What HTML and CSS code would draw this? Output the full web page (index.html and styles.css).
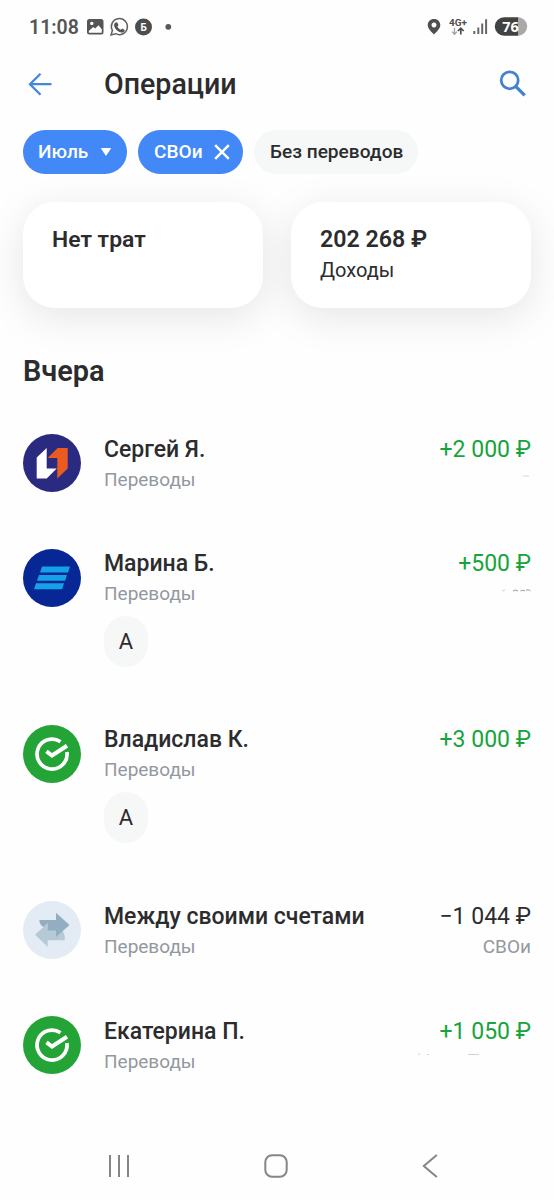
FILE: index.html
```html
<!DOCTYPE html>
<html lang="ru">
<head>
<meta charset="utf-8">
<title>Операции</title>
<link rel="stylesheet" href="styles.css">
</head>
<body>
<div class="screen">
  <div class="status">
    <span class="clock">11:08</span>
    <svg class="st-left" width="100" height="20" viewBox="85 17 100 20">
      <path fill="#555" fill-rule="evenodd" d="M89.500 19h11.500a2.500 2.500 0 0 1 2.500 2.500v10.500a2.500 2.500 0 0 1-2.500 2.500H89.500a2.500 2.500 0 0 1-2.500-2.500V21.500a2.500 2.500 0 0 1 2.500-2.500zM88.800 32.700h13v-3.500l-3.300-4-3.400 3.400-1.800-1.500-4.500 3.800zM91.800 21.700a1.700 1.700 0 1 0 .01 0z"/>
      <path fill="none" stroke="#606060" stroke-width="1.500" d="M111 35l1.400-4.500a8 8 0 1 1 3.300 3.200z"/>
      <path fill="#555" d="M115.600 22.400l1.500-.2 1.400 2.900-1.100 1.400c.8 1.600 1.800 2.600 3.300 3.300l1.400-1.400 2.700 1.500c-.2 2-1.600 2.800-3.200 2.600-3.600-.5-7.200-4-7.500-7.300-.1-1.200.5-2.200 1.500-2.800z"/>
      <circle cx="143.500" cy="27" r="8.500" fill="#4d4d4d"/>
      <text class="badge-letter" x="143.600" y="30.700" text-anchor="middle">Б</text>
      <circle cx="168.300" cy="26.800" r="2.900" fill="#595959"/>
    </svg>
    <svg class="st-right" width="102" height="22" viewBox="426 16 102 22">
      <path fill="#4f4f4f" fill-rule="evenodd" d="M434 19c3.700 0 6.300 2.700 6.300 6 0 4-4 7-6.300 9.500-2.300-2.500-6.300-5.500-6.300-9.500 0-3.300 2.600-6 6.300-6zm0 3.600a2.500 2.500 0 1 0 .01 0z"/>
      <text class="net" x="449" y="25.800" textLength="18" lengthAdjust="spacingAndGlyphs">4G+</text>
      <path fill="none" stroke="#a2a2a2" stroke-width="1.300" d="M454.500 28v6.300M452 31.600l2.500 2.600 2.500-2.600"/>
      <path fill="none" stroke="#4d4d4d" stroke-width="1.700" d="M460.800 34.500v-6M457.900 31l2.900-2.900 2.900 2.900"/>
      <path fill="none" stroke="#666" stroke-width="2" d="M474.300 31v3M478.300 27.500V34M482.200 23.500V34M486.100 19.300V34"/>
      <path fill="#424242" d="M518.500 17.300H504a9.200 9.200 0 0 0 0 18.400h14.500z"/>
      <path fill="#a9a9a9" d="M518 17.300a9.200 9.200 0 0 1 0 18.400z"/>
      <text class="pct" x="510.500" y="31.900" text-anchor="middle">76</text>
    </svg>
  </div>

  <div class="header">
    <svg class="back" width="24" height="24" viewBox="0 0 24 24"><path fill="none" stroke="#4386df" stroke-width="2.300" d="M23.500 12.200H2M12.500 1.700L2 12.200 12.500 22.700"/></svg>
    <h1 class="title">Операции</h1>
    <svg class="search" width="28" height="28" viewBox="0 0 28 28"><circle cx="10.700" cy="10.300" r="8.500" fill="none" stroke="#4681cb" stroke-width="2.800"/><path stroke="#4681cb" stroke-width="3.300" d="M16.700 16.300l9 9"/></svg>
  </div>

  <div class="chips">
    <div class="chip chip-month">Июль<svg width="12" height="9" viewBox="0 0 12 9"><path fill="#fff" stroke="#fff" stroke-linejoin="round" d="M1.500 1.500h9L6 8.300z"/></svg></div>
    <div class="chip chip-account">СВОи<svg width="16" height="16" viewBox="0 0 16 16"><path stroke="#fff" stroke-width="2.500" d="M1.200 1.200l13.600 13.600M14.800 1.200L1.200 14.800"/></svg></div>
    <div class="chip chip-light">Без переводов</div>
  </div>

  <div class="cards">
    <div class="card"><div class="card-title">Нет трат</div></div>
    <div class="card"><div class="card-title card-sum">202 268 ₽</div><div class="card-sub">Доходы</div></div>
  </div>

  <h2 class="day">Вчера</h2>

  <div class="list">
    <div class="row">
      <svg class="avatar" viewBox="0 0 58 58"><circle cx="29" cy="29" r="29" fill="#2a2a80"/><path fill="#fff" d="M13.700 23.500L23.700 14v20.500h10L23.700 44.500h-10z"/><path fill="#eb5b20" d="M34.700 14h10v20.500L34.300 44.500V24h-9.600z"/></svg>
      <div class="info"><div class="name">Сергей Я.</div><div class="kind">Переводы</div></div>
      <div class="side"><div class="sum plus">+2 000 ₽</div>
        <svg class="trace" width="120" height="4" viewBox="0 0 120 4"><path stroke="#d8d8d8" d="M112 2.500q3-1.500 6 0" fill="none"/></svg></div>
    </div>
    <div class="row row-tagged">
      <svg class="avatar" viewBox="0 0 58 58"><circle cx="29" cy="29" r="29" fill="#072795"/><path fill="#16a0e8" d="M19 17.500h28l-1.900 6H17zM16 26h28l-1.900 5.700H14zM13 34.200h28l-1.900 6H11z"/></svg>
      <div class="info"><div class="name">Марина Б.</div><div class="kind">Переводы</div><div class="tag">А</div></div>
      <div class="side"><div class="sum plus">+500 ₽</div>
        <svg class="trace" width="120" height="4" viewBox="0 0 120 4"><path stroke="#9b9b9b" d="M102 3q2.500-2 5 0M109.500 3q2.500-1.500 4.500 0M115 2h2q2 0 2.500 1" fill="none"/><path stroke="#d0d0d0" d="M91 3l3-1"/></svg></div>
    </div>
    <div class="row row-tagged">
      <svg class="avatar" viewBox="0 0 58 58"><g id="check"><circle cx="29" cy="29" r="29" fill="#24a336"/><path fill="none" stroke="#fff" stroke-width="3.700" d="M37.500 16.700A15 15 0 1 0 43.900 27"/><path fill="none" stroke="#fff" stroke-width="4" d="M23.500 26.300l5.500 4.200 15-9.700"/></g></svg>
      <div class="info"><div class="name">Владислав К.</div><div class="kind">Переводы</div><div class="tag">А</div></div>
      <div class="side"><div class="sum plus">+3 000 ₽</div></div>
    </div>
    <div class="row">
      <svg class="avatar" viewBox="0 0 58 58"><circle cx="29" cy="29" r="29" fill="#e3ebf4"/><path fill="#b5c9d7" d="M12 33.800L24.700 22.200v5.300H39l2.700 7.500v4.300h-17v6.500z"/><path fill="#93aec1" d="M16.300 19h16.700v-7.300L46.500 23.900 33 36v-6.500h-8.300v-7.300L20.500 26q-4-2-4.200-7z"/></svg>
      <div class="info"><div class="name">Между своими счетами</div><div class="kind">Переводы</div></div>
      <div class="side"><div class="sum">−1 044 ₽</div><div class="kind">СВОи</div></div>
    </div>
    <div class="row">
      <svg class="avatar" viewBox="0 0 58 58"><use href="#check"/></svg>
      <div class="info"><div class="name">Екатерина П.</div><div class="kind">Переводы</div></div>
      <div class="side"><div class="sum plus">+1 050 ₽</div>
        <svg class="trace trace-near" width="120" height="4" viewBox="0 0 120 4"><path stroke="#d2d2d2" d="M7 3l2-1.500M16 2.500h2M57 2.500h11"/></svg></div>
    </div>
  </div>

  <div class="nav">
    <svg width="22" height="24" viewBox="0 0 22 24"><path stroke="#858585" stroke-width="2" d="M2 1v22M11 1v22M20 1v22"/></svg>
    <svg width="24" height="24" viewBox="0 0 24 24"><rect x="1.300" y="1.300" width="21.400" height="21.400" rx="6.800" fill="none" stroke="#858585" stroke-width="2"/></svg>
    <svg width="22" height="24" viewBox="0 0 22 24"><path fill="none" stroke="#858585" stroke-width="2" d="M14.800 1L1.800 12l13 11"/></svg>
  </div>
</div>
</body>
</html>
```

FILE: styles.css
```css
* { box-sizing: border-box; }
body { margin: 0; background: #fefefe; color: #2c2c2e; font-family: Roboto, "Noto Sans", sans-serif; }
svg { display: block; flex: none; }
.screen { width: 554px; height: 1200px; overflow: hidden; display: flex; flex-direction: column; }

.status { height: 54px; flex: none; display: flex; align-items: center; padding: 0 26px 0 29px; }
.clock { width: 56px; font-size: 19.500px; font-weight: 600; color: #555; white-space: nowrap; }
.st-right { margin-left: auto; }
.badge-letter { font: bold 10px Roboto, sans-serif; fill: #fff; }
.net { font: bold 9.500px Roboto, sans-serif; fill: #4d4d4d; }
.pct { font: bold 14.500px "Open Sans", sans-serif; fill: #fff; }

.header { height: 60px; flex: none; display: flex; align-items: center; padding: 0 27px 0 28px; }
.title { margin: 0 0 1px 52px; font-size: 28.600px; line-height: 36px; font-weight: 500; }
.search { margin-left: auto; }

.chips { height: 44px; flex: none; margin: 16px 23px 0; display: flex; gap: 11px; }
.chip { display: flex; align-items: center; border-radius: 22px; padding: 0 15px; height: 43.500px; font-size: 19.100px; font-weight: 500; color: #fff; background: #4288f7; white-space: nowrap; }
.chip-month { width: 104px; justify-content: space-between; }
.chip-account { width: 105px; justify-content: space-between; padding: 0 13px 0 16px; }
.chip-light { width: 164px; padding-left: 16px; background: #f6f8f8; color: #2c2c2e; }

.cards { flex: none; margin: 28px 23px 0; display: grid; grid-template-columns: 1fr 1fr; gap: 28px; }
.card { height: 105.500px; padding: 22px 29px; border-radius: 32px; background: #fff; box-shadow: 0 9px 40px rgba(0, 0, 0, 0.1); }
.card-title { font-size: 22.900px; line-height: 31px; font-weight: 600; white-space: nowrap; }
.card-sum { font-size: 23.200px; }
.card-sub { font-size: 20px; line-height: 30px; }

.day { flex: none; margin: 44px 23px 0; font-size: 28.900px; line-height: 38px; font-weight: 600; }

.list { flex: none; margin-top: 44.500px; padding: 0 23px; }
.row { height: 115px; display: grid; grid-template-columns: 58px 1fr auto; column-gap: 23px; align-items: start; }
.row-tagged { height: 176px; }
.avatar { width: 58px; height: 58px; }
.row-tagged .info, .row-tagged .side { margin-top: -1.500px; }
.name { font-size: 23px; line-height: 31px; font-weight: 500; white-space: nowrap; }
.kind { font-size: 19px; line-height: 30px; color: #92989e; }
.tag { width: 44px; height: 51px; margin-top: 7.500px; border-radius: 22px; background: #f6f8f8; display: flex; align-items: center; justify-content: center; font-size: 22px; }
.side { text-align: right; }
.sum { font-size: 23px; line-height: 31px; white-space: nowrap; }
.plus { color: #17a43b; }
.trace { margin: 9px 0 0 auto; }
.trace-near { margin-top: 5px; }

.nav { height: 24px; flex: none; margin-top: 23px; padding: 0 110px 0 108px; display: flex; justify-content: space-between; }
```
